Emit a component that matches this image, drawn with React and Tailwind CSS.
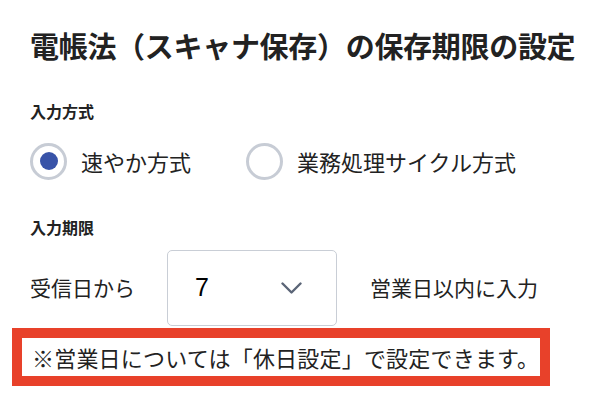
import { useState } from "react";

function Radio({ checked, label, onClick }) {
  return (
    <button type="button" onClick={onClick} className="flex items-center gap-[14px]">
      <span className="flex h-[37px] w-[37px] items-center justify-center rounded-full border-[3px] border-[#c7ccd5] bg-white">
        {checked && <span className="h-[18px] w-[18px] rounded-full bg-[#3853a8]" />}
      </span>
      <span className="text-[22px] leading-[37px] text-[#222]">{label}</span>
    </button>
  );
}

export default function App() {
  const [mode, setMode] = useState("fast");

  return (
    <div
      className="h-[402px] w-[614px] overflow-hidden bg-white pl-[30px] pt-[25px] text-[#222]"
      style={{ fontFamily: '"Noto Sans CJK JP", "Noto Sans", sans-serif' }}
    >
      <h1 className="h-[40px] text-[29px] font-bold leading-[40px] tracking-[-0.3px]">
        電帳法（スキャナ保存）の保存期限の設定
      </h1>

      <div className="mt-[34px] h-[24px] text-[16px] font-bold leading-[24px]">入力方式</div>

      <div className="mt-[19px] flex h-[38px] items-center gap-[55px]">
        <Radio checked={mode === "fast"} label="速やか方式" onClick={() => setMode("fast")} />
        <Radio checked={mode === "cycle"} label="業務処理サイクル方式" onClick={() => setMode("cycle")} />
      </div>

      <div className="mt-[35px] h-[24px] text-[16px] font-bold leading-[24px]">入力期限</div>

      <div className="mt-[11px] flex h-[76px] items-center">
        <span className="w-[137px] text-[21px]">受信日から</span>
        <div className="flex h-[76px] w-[170px] items-center justify-between rounded-[5px] border border-[#c9ced6] pl-[27px] pr-[34px]">
          <span className="text-[25px] text-black" style={{ fontFamily: '"Liberation Sans", sans-serif' }}>7</span>
          <svg width="21" height="12" viewBox="0 0 21 12" fill="none">
            <path d="M1.5 1.5 L10.5 10.5 L19.5 1.5" stroke="#5b6577" strokeWidth="2.4" strokeLinecap="round" strokeLinejoin="round" />
          </svg>
        </div>
        <span className="ml-[33px] text-[21px]">営業日以内に入力</span>
      </div>

      <div className="ml-[-18px] mt-[2px] h-[58px] w-[538px] border-[10px] border-[#e8412a] bg-white pl-[10px] text-[22px] leading-[38px] tracking-[0.2px]">
        ※営業日については「休日設定」で設定できます。
      </div>
    </div>
  );
}
